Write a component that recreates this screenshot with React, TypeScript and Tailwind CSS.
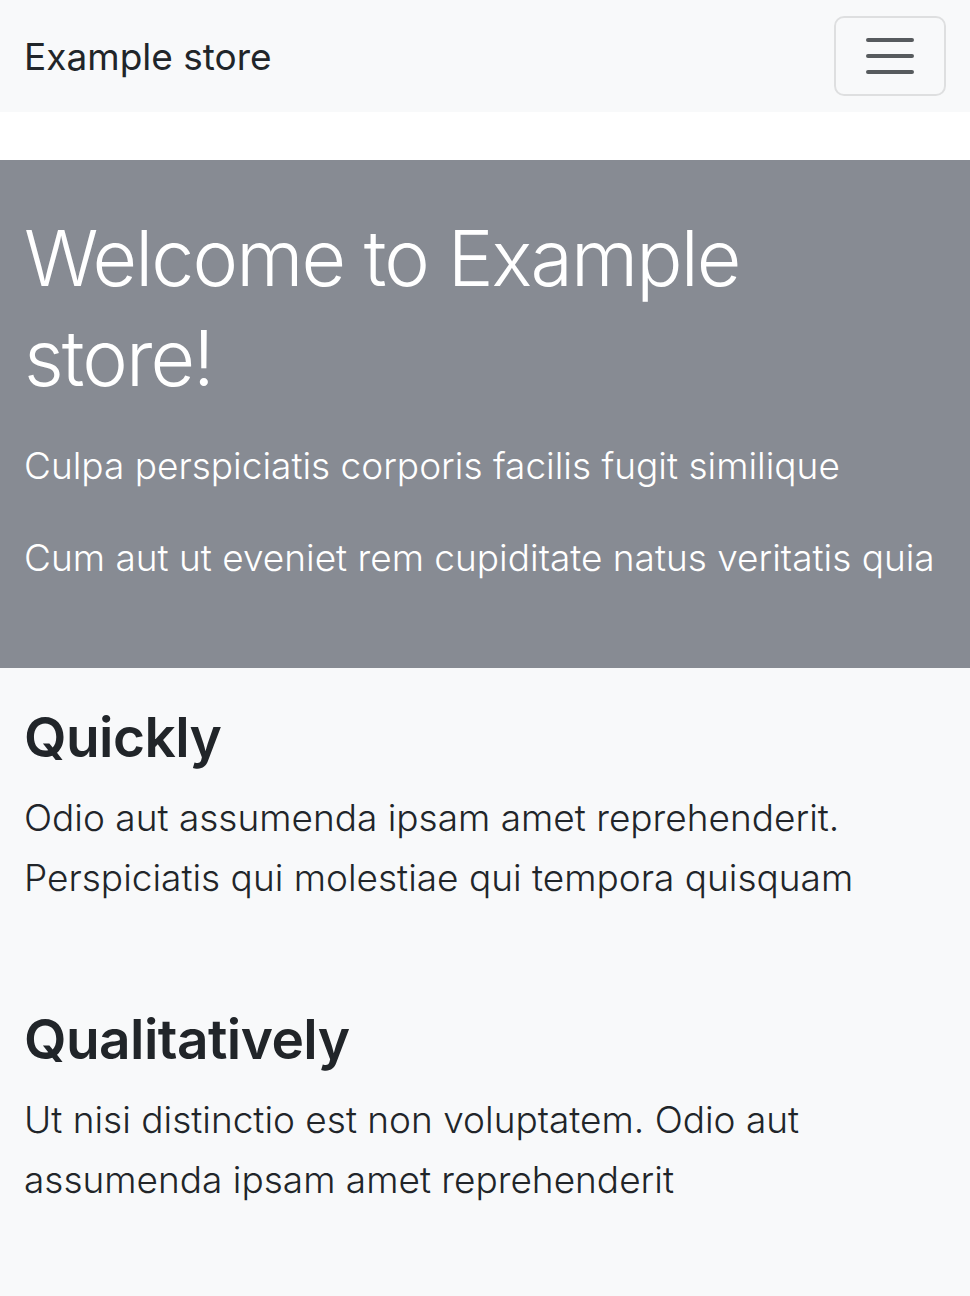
export default function App() {
  return (
    <div className="min-h-[1296px] bg-[#f8f9fa] font-['Inter','Noto_Sans',sans-serif] text-[#212529]">
      {/* Navbar */}
      <nav className="flex h-[112px] items-center justify-between bg-[#f8f9fa] px-[24px]">
        <span className="text-[37px] leading-none">Example store</span>
        <button className="flex h-[80px] w-[112px] items-center justify-center rounded-[10px] border-2 border-black/10">
          <svg width="60" height="60" viewBox="0 0 30 30">
            <path
              d="M4 7h22M4 15h22M4 23h22"
              stroke="rgba(33,37,41,0.75)"
              strokeWidth="2"
              strokeLinecap="round"
              strokeMiterlimit="10"
            />
          </svg>
        </button>
      </nav>

      <div className="h-[48px] bg-white" />

      {/* Hero */}
      <section className="bg-[#878b93] px-[24px] pt-[48px] pb-[80px] text-white">
        <h1 className="mb-[28px] text-[77px] font-light leading-[100px] tracking-[-0.025em]">
          Welcome to Example store!
        </h1>
        <p className="mb-[32px] text-[37px] font-light leading-[60px]">
          Culpa perspiciatis corporis facilis fugit similique
        </p>
        <p className="text-[37px] font-light leading-[60px] whitespace-nowrap">
          Cum aut ut eveniet rem cupiditate natus veritatis quia
        </p>
      </section>

      {/* Features */}
      <section className="px-[24px] pt-[38px]">
        <div className="pb-[100px]">
          <h2 className="mb-[20px] text-[55px] font-semibold leading-[62px] tracking-[-0.01em]">Quickly</h2>
          <p className="text-[37px] font-light leading-[60px]">
            Odio aut assumenda ipsam amet reprehenderit.
            <br />
            Perspiciatis qui molestiae qui tempora quisquam
          </p>
        </div>
        <div>
          <h2 className="mb-[20px] text-[55px] font-semibold leading-[62px] tracking-[-0.01em]">Qualitatively</h2>
          <p className="text-[37px] font-light leading-[60px]">
            Ut nisi distinctio est non voluptatem. Odio aut
            <br />
            assumenda ipsam amet reprehenderit
          </p>
        </div>
      </section>
    </div>
  );
}
